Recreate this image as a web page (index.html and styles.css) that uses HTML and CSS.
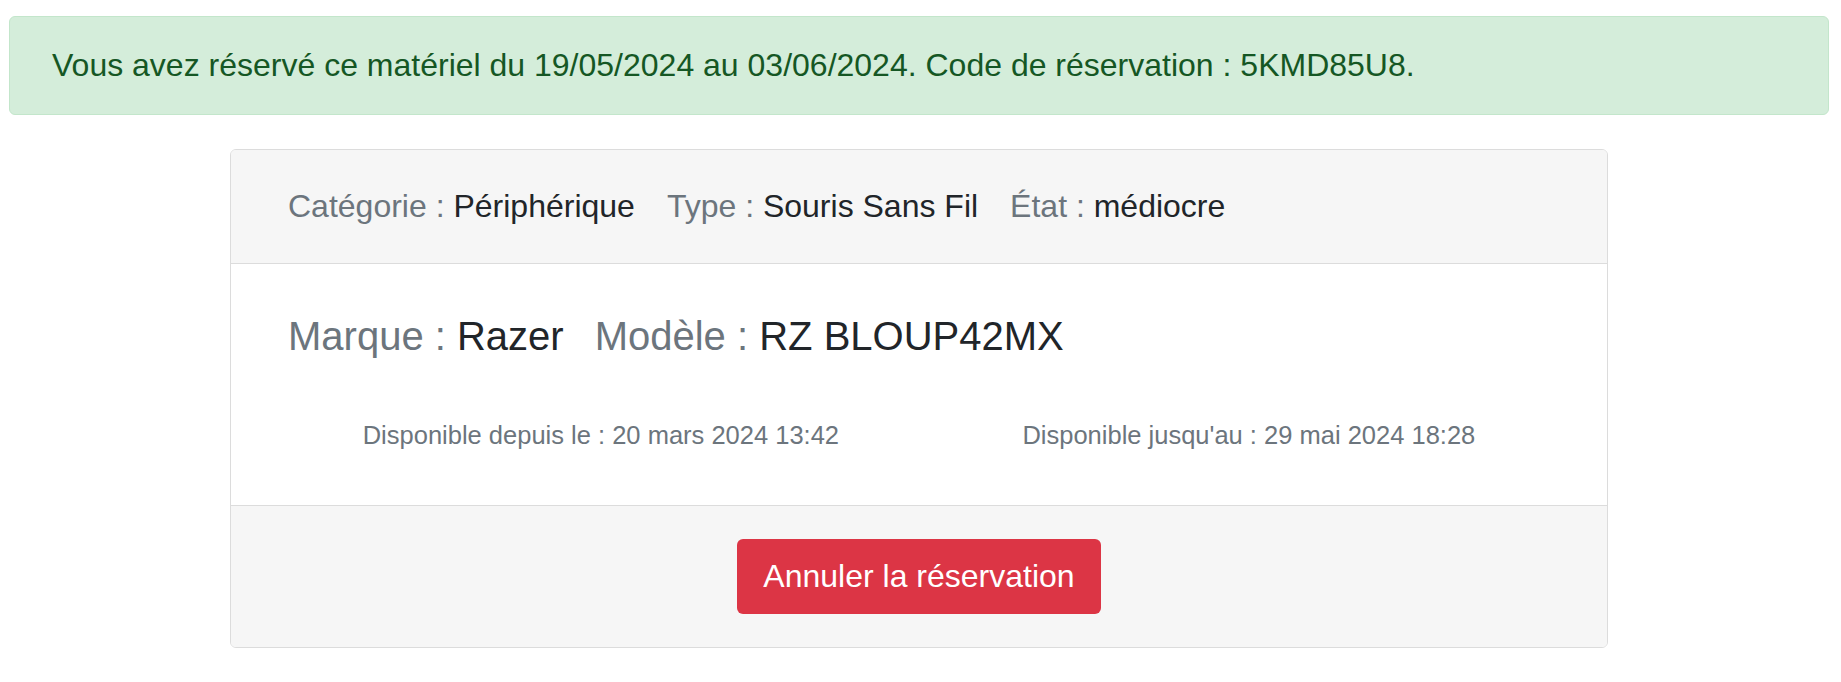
FILE: index.html
```html
<!DOCTYPE html>
<html lang="fr">
<head>
  <meta charset="UTF-8" />
  <title>Réservation</title>
  <link rel="stylesheet" href="styles.css">
</head>
<body>
  <div class="page">
    <div class="alert-success">
      Vous avez réservé ce matériel du 19/05/2024 au 03/06/2024. Code de réservation : 5KMD85U8.
    </div>

    <div class="card">
      <div class="card-header">
        <span class="field"><span class="label">Catégorie :</span> Périphérique</span>
        <span class="field"><span class="label">Type :</span> Souris Sans Fil</span>
        <span class="field"><span class="label">État :</span> médiocre</span>
      </div>
      <div class="card-body">
        <h2 class="card-title">
          <span class="field"><span class="label">Marque :</span> Razer</span>
          <span class="field"><span class="label">Modèle :</span> RZ BLOUP42MX</span>
        </h2>
        <div class="dates">
          <span>Disponible depuis le : 20 mars 2024 13:42</span>
          <span>Disponible jusqu'au : 29 mai 2024 18:28</span>
        </div>
      </div>
      <div class="card-footer">
        <button class="btn-danger">Annuler la réservation</button>
      </div>
    </div>
  </div>
</body>
</html>
```

FILE: styles.css
```css
body {
  margin: 0;
  font-family: "Liberation Sans", Arial, sans-serif;
  color: #212529;
  background: #fff;
}
.page {
  padding: 16px 12px 0 9px;
}
.alert-success {
  background-color: #d4edda;
  border: 1px solid #c3e6cb;
  color: #155724;
  border-radius: 6px;
  padding: 24px 42px 25px;
  font-size: 32px;
  line-height: 48px;
}
.card {
  width: 1378px;
  box-sizing: border-box;
  margin: 34px auto 0;
  border: 1px solid #dcdcdc;
  border-radius: 6px;
  overflow: hidden;
}
.label {
  color: #6c757d;
}
.card-header {
  background: #f6f6f6;
  border-bottom: 1px solid #dcdcdc;
  padding: 32px 57px 33px;
  font-size: 32px;
  line-height: 48px;
  display: flex;
  gap: 32px;
}
.card-body {
  padding: 48px 40px 52px;
}
.card-title {
  margin: 0;
  padding: 0 17px;
  font-weight: normal;
  font-size: 40px;
  line-height: 48px;
  display: flex;
  gap: 31px;
}
.dates {
  margin-top: 57px;
  display: flex;
  justify-content: space-around;
  color: #6c757d;
  font-size: 25.5px;
  line-height: 36px;
}
.card-footer {
  background: #f6f6f6;
  border-top: 1px solid #dcdcdc;
  padding: 33px 0;
  text-align: center;
}
.btn-danger {
  font-family: inherit;
  font-size: 32px;
  line-height: 49px;
  padding: 13px 26px;
  color: #fff;
  background-color: #dc3545;
  border: none;
  border-radius: 6px;
}
```
